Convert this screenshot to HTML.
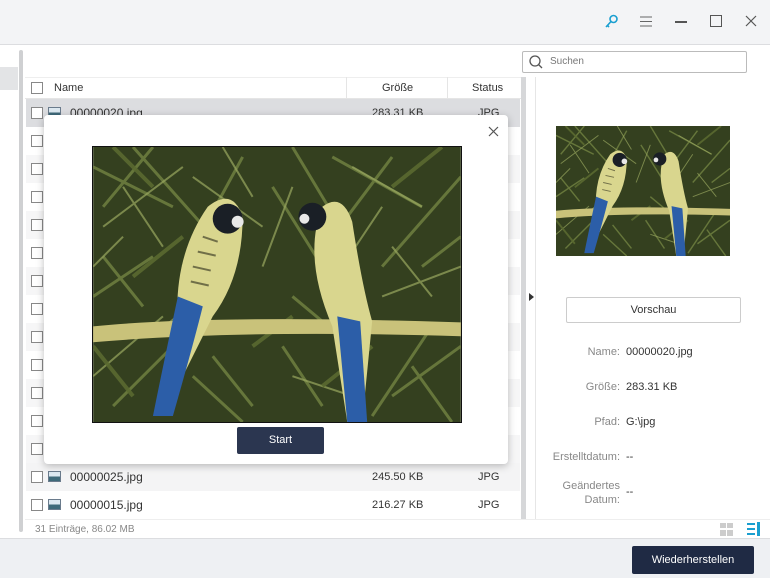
<!DOCTYPE html><html><head><style>
*{margin:0;padding:0;box-sizing:border-box}
body{width:770px;height:578px;position:relative;overflow:hidden;background:#fff;font-family:"Liberation Sans",sans-serif;color:#333;font-size:11px}
.a{position:absolute}
.cb{position:absolute;width:12px;height:12px;border:1px solid #888;background:#fff}
.row{position:absolute;left:26px;width:494px;height:28px}
.ic{position:absolute;left:22px;top:8px;width:13px;height:11px;border:1px solid #6a7b8c;background:linear-gradient(#dde8f0 50%,#3f6a7a 50%)}
.nm{position:absolute;left:44px;top:7px;font-size:12px}
.sz{position:absolute;left:346px;top:8px}
.st{position:absolute;left:452px;top:8px}
.lbl{position:absolute;right:150px;text-align:right;color:#888;font-size:11px;width:80px}
.val{position:absolute;left:626px;font-size:11px;color:#333}
</style></head><body>
<div class="a" style="left:0;top:0;width:770px;height:45px;background:#f3f4f6;border-bottom:1px solid #dcdde0"></div>
<svg class="a" style="left:602px;top:13px" width="18" height="18" viewBox="0 0 18 18"><circle cx="11.5" cy="6" r="3.5" fill="none" stroke="#1a9fd0" stroke-width="1.6"/><path d="M9 8.5 L4 14 M5.5 12.5 L7 14" stroke="#1a9fd0" stroke-width="1.6" fill="none"/></svg>
<svg class="a" style="left:639px;top:15px" width="14" height="13"><path d="M1 2H13M1 6.5H13M1 11H13" stroke="#666" stroke-width="1.1"/></svg>
<div class="a" style="left:675px;top:21px;width:12px;height:1.5px;background:#555"></div>
<div class="a" style="left:710px;top:15px;width:12px;height:12px;border:1.3px solid #555"></div>
<svg class="a" style="left:745px;top:15px" width="12" height="12"><path d="M1 1L11 11M11 1L1 11" stroke="#555" stroke-width="1.2"/></svg>
<div class="a" style="left:0;top:67px;width:18px;height:23px;background:#e3e4e6"></div>
<div class="a" style="left:19px;top:50px;width:4px;height:482px;background:#cfd0d2;border-radius:2px"></div>
<div class="a" style="left:522px;top:51px;width:225px;height:22px;border:1px solid #bbb;border-radius:2px;background:#fff"></div>
<svg class="a" style="left:528px;top:54px" width="15" height="15"><circle cx="7" cy="7" r="5" fill="none" stroke="#555" stroke-width="1.3"/><path d="M10.5 10.5L14 14" stroke="#555" stroke-width="1.3"/></svg>
<div class="a" style="left:550px;top:56px;color:#777;font-size:10px">Suchen</div>
<div class="a" style="left:25px;top:77px;width:496px;height:22px;border-bottom:1px solid #e5e5e5;border-top:1px solid #eee"></div>
<div class="cb" style="left:31px;top:82px"></div>
<div class="a" style="left:54px;top:82px">Name</div>
<div class="a" style="left:346px;top:77px;width:1px;height:22px;background:#e5e5e5"></div>
<div class="a" style="left:447px;top:77px;width:1px;height:22px;background:#e5e5e5"></div>
<div class="a" style="left:382px;top:82px">Größe</div>
<div class="a" style="left:472px;top:82px">Status</div>
<div class="a" style="left:521px;top:77px;width:5px;height:442px;background:#d6d7d9"></div>
<div class="a" style="left:535px;top:77px;width:1px;height:442px;background:#e6e6e6"></div>
<svg class="a" style="left:529px;top:293px" width="6" height="8"><path d="M0 0L5 4L0 8Z" fill="#333"/></svg>
<div class="row" style="top:99px;background:#dcdde0"><div class="cb" style="left:5px;top:8px"></div><div class="ic"></div><div class="nm">00000020.jpg</div><div class="sz">283.31 KB</div><div class="st">JPG</div></div>
<div class="row" style="top:127px"><div class="cb" style="left:5px;top:8px"></div></div>
<div class="row" style="top:155px;background:#f6f6f7"><div class="cb" style="left:5px;top:8px"></div></div>
<div class="row" style="top:183px"><div class="cb" style="left:5px;top:8px"></div></div>
<div class="row" style="top:211px;background:#f6f6f7"><div class="cb" style="left:5px;top:8px"></div></div>
<div class="row" style="top:239px"><div class="cb" style="left:5px;top:8px"></div></div>
<div class="row" style="top:267px;background:#f6f6f7"><div class="cb" style="left:5px;top:8px"></div></div>
<div class="row" style="top:295px"><div class="cb" style="left:5px;top:8px"></div></div>
<div class="row" style="top:323px;background:#f6f6f7"><div class="cb" style="left:5px;top:8px"></div></div>
<div class="row" style="top:351px"><div class="cb" style="left:5px;top:8px"></div></div>
<div class="row" style="top:379px;background:#f6f6f7"><div class="cb" style="left:5px;top:8px"></div></div>
<div class="row" style="top:407px"><div class="cb" style="left:5px;top:8px"></div></div>
<div class="row" style="top:435px;background:#f6f6f7"><div class="cb" style="left:5px;top:8px"></div></div>
<div class="row" style="top:463px;background:#f4f4f5"><div class="cb" style="left:5px;top:8px"></div><div class="ic"></div><div class="nm">00000025.jpg</div><div class="sz">245.50 KB</div><div class="st">JPG</div></div>
<div class="row" style="top:491px"><div class="cb" style="left:5px;top:8px"></div><div class="ic"></div><div class="nm">00000015.jpg</div><div class="sz">216.27 KB</div><div class="st">JPG</div></div>
<div class="a" style="left:25px;top:519px;width:745px;height:1px;background:#eee"></div>
<div class="a" style="left:35px;top:524px;color:#888;font-size:10px">31 Einträge, 86.02 MB</div>
<div class="a" style="left:720px;top:523px;width:13px;height:13px;background:linear-gradient(90deg,#ccc 45%,transparent 45%,transparent 55%,#ccc 55%);"></div>
<div class="a" style="left:720px;top:528px;width:13px;height:2px;background:#fff"></div>
<div class="a" style="left:747px;top:523px;width:8px;height:2px;background:#1a9fd0;box-shadow:0 5px 0 #1a9fd0,0 10px 0 #1a9fd0"></div>
<div class="a" style="left:757px;top:522px;width:3px;height:14px;background:#1a9fd0"></div>
<div class="a" style="left:0;top:538px;width:770px;height:40px;background:#eef0f3;border-top:1px solid #dcdde0"></div>
<div class="a" style="left:632px;top:546px;width:122px;height:28px;background:#1f2a44;border-radius:2px;color:#fff;text-align:center;line-height:28px;font-size:11px">Wiederherstellen</div>
<svg class="a" style="left:556px;top:126px" width="174" height="130" viewBox="0 0 369 276" preserveAspectRatio="none"><use href="#pic"/></svg>
<div class="a" style="left:566px;top:297px;width:175px;height:26px;border:1px solid #ccc;border-radius:2px;text-align:center;line-height:24px;font-size:11px">Vorschau</div>
<div class="lbl" style="top:346px">Name:</div><div class="val" style="top:346px">00000020.jpg</div>
<div class="lbl" style="top:381px">Größe:</div><div class="val" style="top:381px">283.31 KB</div>
<div class="lbl" style="top:416px">Pfad:</div><div class="val" style="top:416px">G:\jpg</div>
<div class="lbl" style="top:451px;width:100px">Erstelltdatum:</div><div class="val" style="top:451px">--</div>
<div class="lbl" style="top:479px;line-height:14px">Geändertes<br>Datum:</div><div class="val" style="top:486px">--</div>
<div class="a" style="left:44px;top:115px;width:464px;height:349px;background:#fff;border-radius:4px;box-shadow:0 2px 8px rgba(0,0,0,.25)"></div>
<svg class="a" style="left:488px;top:126px" width="11" height="11"><path d="M1 1L10 10M10 1L1 10" stroke="#555" stroke-width="1.2"/></svg>
<svg class="a" style="left:92px;top:146px;border:1px solid #111" width="370" height="277" viewBox="0 0 369 276">
<defs><g id="pic">
<rect width="369" height="276" fill="#34401f"/>
<g stroke="#6f8040" stroke-width="3" opacity=".85">
<path d="M0 20L80 60M40 0L120 90M150 10L90 120M200 0L260 100M300 10L240 90M369 30L290 120M0 150L60 110M20 260L80 200M280 270L340 180M369 200L300 250M160 260L120 210M200 150L260 200M60 0L10 60M180 40L230 120M330 120L369 90M10 110L50 160M100 230L150 276M190 200L230 260M320 220L360 276M240 10L330 60"/></g>
<g stroke="#9aa860" stroke-width="2" opacity=".7"><path d="M10 80L90 20M100 30L170 80M330 60L260 20M0 230L70 170M290 150L369 120M120 140L60 190M170 120L200 40M30 40L70 100M340 150L300 100M0 120L30 90M200 230L260 250M130 0L160 50M250 120L290 60"/></g>
<g stroke="#5a6a30" stroke-width="4" opacity=".9"><path d="M20 0L60 40M90 90L40 130M350 0L300 40M280 200L230 240M160 200L200 170M0 200L40 250"/></g>
<path d="M0 180 Q120 168 369 176 L369 190 Q150 183 0 196Z" fill="#c9c27a"/>
<path d="M115 60 Q140 40 150 70 Q150 130 120 170 L70 270 L85 180 Q80 110 115 60Z" fill="#d9d68e"/>
<g stroke="#2b2b1a" stroke-width="2" opacity=".6"><path d="M110 90l15 5M105 105l18 4M100 120l18 4M98 135l18 4M255 90l-15 5M258 105l-18 4M262 120l-18 4M265 135l-18 4"/></g>
<path d="M85 150 Q70 220 60 270 L80 270 Q100 200 110 160Z" fill="#2c5ea8"/>
<circle cx="135" cy="72" r="15" fill="#1a1f26"/><circle cx="145" cy="75" r="6" fill="#e8e8e8"/>
<path d="M230 60 Q250 45 260 75 Q270 140 280 175 L270 276 L255 276 L240 180 Q210 110 230 60Z" fill="#d9d68e"/>
<path d="M245 170 L255 276 L275 276 L268 175Z" fill="#2c5ea8"/>
<circle cx="220" cy="70" r="14" fill="#1a1f26"/><circle cx="212" cy="72" r="5" fill="#e8e8e8"/>
</g></defs><use href="#pic"/></svg>
<div class="a" style="left:237px;top:427px;width:87px;height:27px;background:#2b3650;border-radius:2px;color:#fff;text-align:center;line-height:27px;font-size:11px">Start</div>
</body></html>
